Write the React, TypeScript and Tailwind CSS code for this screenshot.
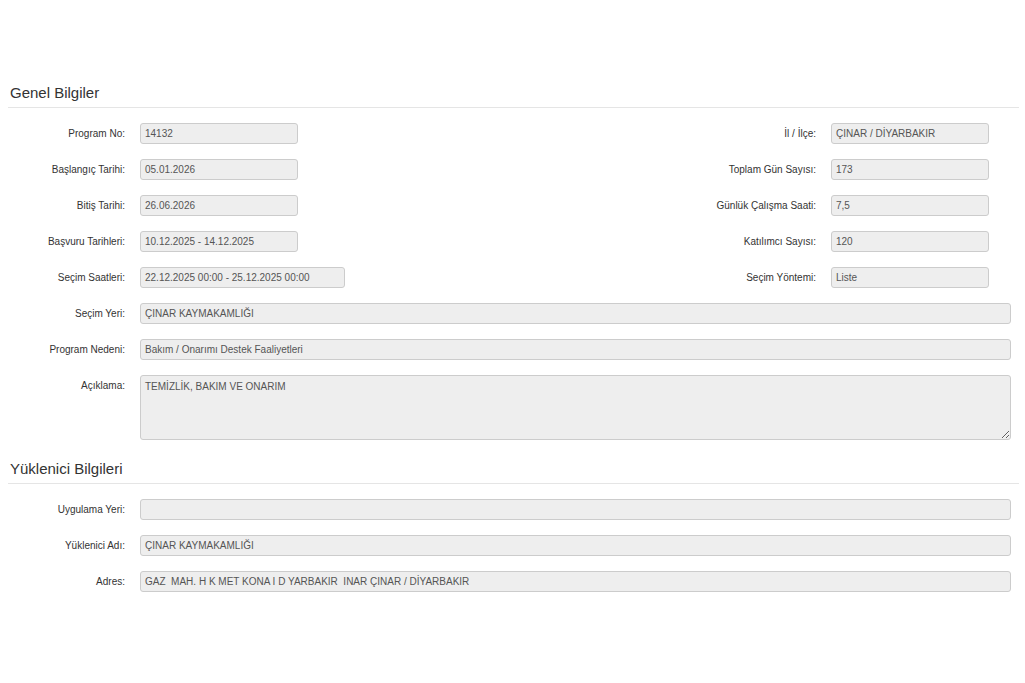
import React from "react";

const font = { fontFamily: '"Liberation Sans", Arial, sans-serif' };

function Field({ value, w }: { value: string; w: string }) {
  return (
    <div
      className={`h-[21px] ${w} shrink-0 rounded-[3px] border border-[#cccccc] bg-[#eeeeee] pl-[4px] text-[10px] leading-[19px] text-[#555555] whitespace-pre overflow-hidden`}
    >
      {value}
    </div>
  );
}

function Label({ text, w }: { text: string; w?: string }) {
  return (
    <div className={`${w ?? "w-[117px]"} shrink-0 text-right text-[10px] leading-[21px] text-[#333333]`}>
      {text}
    </div>
  );
}

function PairRow({
  l,
  lv,
  r,
  rv,
  lw,
}: {
  l: string;
  lv: string;
  r: string;
  rv: string;
  lw?: string;
}) {
  return (
    <div className="flex items-center">
      <Label text={l} />
      <div className="ml-[15px]">
        <Field value={lv} w={lw ?? "w-[158px]"} />
      </div>
      <div className="flex-1" />
      <Label text={r} w="w-[160px]" />
      <div className="ml-[15px] mr-[22px]">
        <Field value={rv} w="w-[158px]" />
      </div>
    </div>
  );
}

function FullRow({ l, v }: { l: string; v: string }) {
  return (
    <div className="flex items-center">
      <Label text={l} />
      <div className="ml-[15px] flex-1">
        <Field value={v} w="w-full" />
      </div>
    </div>
  );
}

function Heading({ text }: { text: string }) {
  return (
    <div className="border-b border-[#e5e5e5] pb-[4px] pl-[2px] text-[15px] leading-[20px] text-[#333333]">
      {text}
    </div>
  );
}

export default function App() {
  return (
    <div style={font} className="min-h-[683px] w-full bg-white pl-[8px] pr-[6px] pt-[83px]">
      <Heading text="Genel Bilgiler" />
      <div className="mt-[15px] flex flex-col gap-[15px] pr-[8px]">
        <PairRow l="Program No:" lv="14132" r="İl / İlçe:" rv="ÇINAR / DİYARBAKIR" />
        <PairRow l="Başlangıç Tarihi:" lv="05.01.2026" r="Toplam Gün Sayısı:" rv="173" />
        <PairRow l="Bitiş Tarihi:" lv="26.06.2026" r="Günlük Çalışma Saati:" rv="7,5" />
        <PairRow l="Başvuru Tarihleri:" lv="10.12.2025 - 14.12.2025" r="Katılımcı Sayısı:" rv="120" />
        <PairRow
          l="Seçim Saatleri:"
          lv="22.12.2025 00:00 - 25.12.2025 00:00"
          r="Seçim Yöntemi:"
          rv="Liste"
          lw="w-[205px]"
        />
        <FullRow l="Seçim Yeri:" v="ÇINAR KAYMAKAMLIĞI" />
        <FullRow l="Program Nedeni:" v="Bakım / Onarımı Destek Faaliyetleri" />
        <div className="flex items-start">
          <div className="w-[117px] shrink-0 pt-[2px] text-right text-[10px] leading-[17px] text-[#333333]">
            Açıklama:
          </div>
          <div className="ml-[15px] flex-1">
            <textarea
              readOnly
              value="TEMİZLİK, BAKIM VE ONARIM"
              style={font}
              className="block h-[65px] w-full rounded-[3px] border border-[#cccccc] bg-[#eeeeee] px-[4px] pt-[2px] text-[10px] leading-[17px] text-[#555555] outline-none"
            />
          </div>
        </div>
      </div>
      <div className="mt-[19px]">
        <Heading text="Yüklenici Bilgileri" />
      </div>
      <div className="mt-[15px] flex flex-col gap-[15px] pr-[8px]">
        <FullRow l="Uygulama Yeri:" v="" />
        <FullRow l="Yüklenici Adı:" v="ÇINAR KAYMAKAMLIĞI" />
        <FullRow l="Adres:" v="GAZ  MAH. H K MET KONA I D YARBAKIR  INAR ÇINAR / DİYARBAKIR" />
      </div>
    </div>
  );
}
